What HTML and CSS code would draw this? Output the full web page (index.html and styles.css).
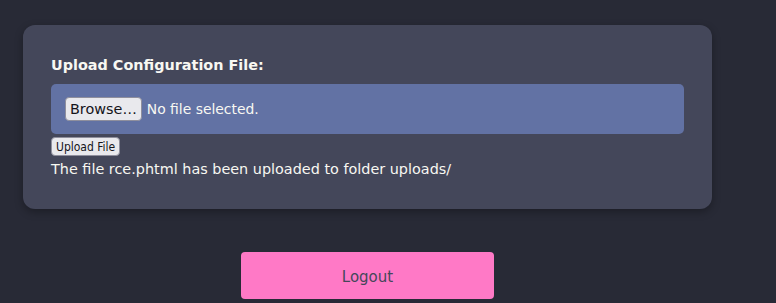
FILE: index.html
```html
<!DOCTYPE html>
<html>
<head>
<meta charset="utf-8">
<link rel="stylesheet" href="styles.css">
</head>
<body>
<div class="page">
  <form class="card">
    <div class="label">Upload Configuration File:</div>
    <div class="file-box">
      <button type="button" class="browse">Browse…</button>
      <span class="file-name">No file selected.</span>
    </div>
    <button type="button" class="upload">Upload File</button>
    <p class="message">The file rce.phtml has been uploaded to folder uploads/</p>
  </form>
  <div class="actions">
    <button type="button" class="logout">Logout</button>
  </div>
</div>
</body>
</html>
```

FILE: styles.css
```css
html, body {
  margin: 0;
  padding: 0;
}
body {
  background: #282a36;
  font-family: "DejaVu Sans", sans-serif;
  color: #f8f8f2;
  width: 776px;
  height: 303px;
  overflow: hidden;
}
.page {
  width: 689px;
  padding: 25px 0 0 23px;
}
.card {
  display: flex;
  flex-direction: column;
  align-items: flex-start;
  background: #44475a;
  border-radius: 12px;
  padding: 32px 28px 0 28px;
  box-shadow: 0 3px 8px rgba(0, 0, 0, 0.3);
  height: 184px;
  box-sizing: border-box;
}
.label {
  font-weight: bold;
  font-size: 14.4px;
  line-height: 17px;
  margin-bottom: 10px;
}
.file-box {
  align-self: stretch;
  display: flex;
  align-items: center;
  height: 50px;
  box-sizing: border-box;
  padding: 0 14px;
  background: #6272a4;
  border-radius: 5px;
}
.browse {
  font-family: "DejaVu Sans", sans-serif;
  font-size: 14.4px;
  height: 24px;
  padding: 0 4px;
  background: #e9e9ed;
  color: #15141a;
  border: 1px solid #8f8f9d;
  border-radius: 4px;
  margin: 0;
}
.file-name {
  font-size: 13.9px;
  margin-left: 5px;
}
.upload {
  font-family: "DejaVu Sans Condensed", "DejaVu Sans", sans-serif;
  font-stretch: condensed;
  font-size: 12px;
  height: 19px;
  padding: 0 4px;
  margin: 3px 0 0 0;
  background: #e9e9ed;
  color: #15141a;
  border: 1px solid #8f8f9d;
  border-radius: 4px;
}
.message {
  font-size: 14.4px;
  line-height: 17px;
  margin: 5px 0 0 0;
}
.actions {
  display: flex;
  justify-content: center;
  margin-top: 43px;
}
.logout {
  width: 253px;
  height: 47px;
  padding: 2px 0 0 0;
  background: #ff79c6;
  color: #44475a;
  border: none;
  border-radius: 4px;
  font-family: "DejaVu Sans", sans-serif;
  font-size: 15px;
}
```
